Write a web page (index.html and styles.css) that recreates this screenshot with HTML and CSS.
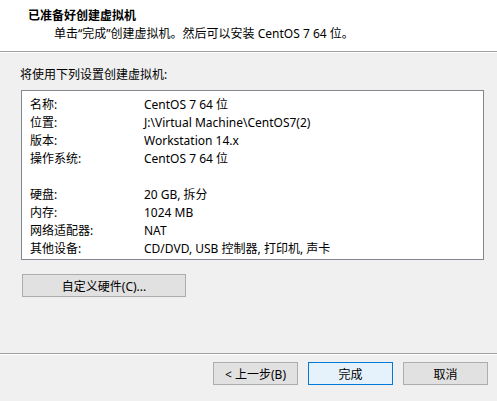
FILE: index.html
```html
<!DOCTYPE html>
<html lang="zh-CN">
  <head>
    <meta charset="UTF-8" />
    <title>新建虚拟机向导</title>
    <link rel="stylesheet" href="styles.css">
  </head>
  <body>
    <div class="wizard">
      <div class="header">
        <div class="title">已准备好创建虚拟机</div>
        <div class="subtitle">单击“完成”创建虚拟机。然后可以安装 CentOS 7 64 位。</div>
      </div>

      <div class="content">
        <div class="intro">将使用下列设置创建虚拟机:</div>
        <div class="summary">
          <div class="row"><span class="key">名称:</span><span class="val">CentOS 7 64 位</span></div>
          <div class="row"><span class="key">位置:</span><span class="val">J:\Virtual Machine\CentOS7(2)</span></div>
          <div class="row"><span class="key">版本:</span><span class="val">Workstation 14.x</span></div>
          <div class="row"><span class="key">操作系统:</span><span class="val">CentOS 7 64 位</span></div>
          <div class="row"></div>
          <div class="row"><span class="key">硬盘:</span><span class="val">20 GB, 拆分</span></div>
          <div class="row"><span class="key">内存:</span><span class="val">1024 MB</span></div>
          <div class="row"><span class="key">网络适配器:</span><span class="val">NAT</span></div>
          <div class="row"><span class="key">其他设备:</span><span class="val">CD/DVD, USB 控制器, 打印机, 声卡</span></div>
        </div>
        <button class="btn btn-wide">自定义硬件(C)...</button>
      </div>

      <div class="footer">
        <button class="btn">&lt; 上一步(B)</button>
        <button class="btn default">完成</button>
        <button class="btn">取消</button>
      </div>
    </div>
  </body>
</html>
```

FILE: styles.css
```css
body {
  margin: 0;
  background-color: #f0f0f0;
  font-family: "Noto Sans", "Noto Sans CJK SC", sans-serif;
  font-size: 12px;
  color: #000;
}

.wizard {
  width: 497px;
  height: 401px;
  display: flex;
  flex-direction: column;
  overflow: hidden;
}

.header {
  height: 52px;
  box-sizing: border-box;
  background-color: #fff;
  border-bottom: 1px solid #a0a0a0;
  box-shadow: 0 1px 0 #fff;
  padding: 7px 0 0 28px;
}

.title {
  font-weight: bold;
  line-height: 18px;
}

.subtitle {
  padding-left: 26px;
  line-height: 18px;
}

.content {
  flex: 1;
  padding: 14px 0 0 20px;
}

.intro {
  line-height: 18px;
}

.summary {
  margin: 6px 0 0 1px;
  width: 463px;
  height: 170px;
  box-sizing: border-box;
  background-color: #fff;
  border: 1px solid #828790;
  padding: 5px 0 0 8px;
}

.row {
  display: flex;
  height: 18px;
  line-height: 18px;
}

.key {
  width: 114px;
}

.btn {
  font-family: inherit;
  font-size: 12px;
  height: 23px;
  width: 85px;
  padding: 0;
  background-color: #e1e1e1;
  border: 1px solid #adadad;
  color: #000;
}

.btn-wide {
  margin: 14px 0 0 2px;
  width: 164px;
}

.btn.default {
  background-color: #e5f1fb;
  border-color: #0078d7;
}

.footer {
  height: 39px;
  border-top: 1px solid #a0a0a0;
  box-shadow: inset 0 1px 0 #fff;
  display: flex;
  justify-content: flex-end;
  gap: 10px;
  padding: 8px 9px 0 0;
}
```
